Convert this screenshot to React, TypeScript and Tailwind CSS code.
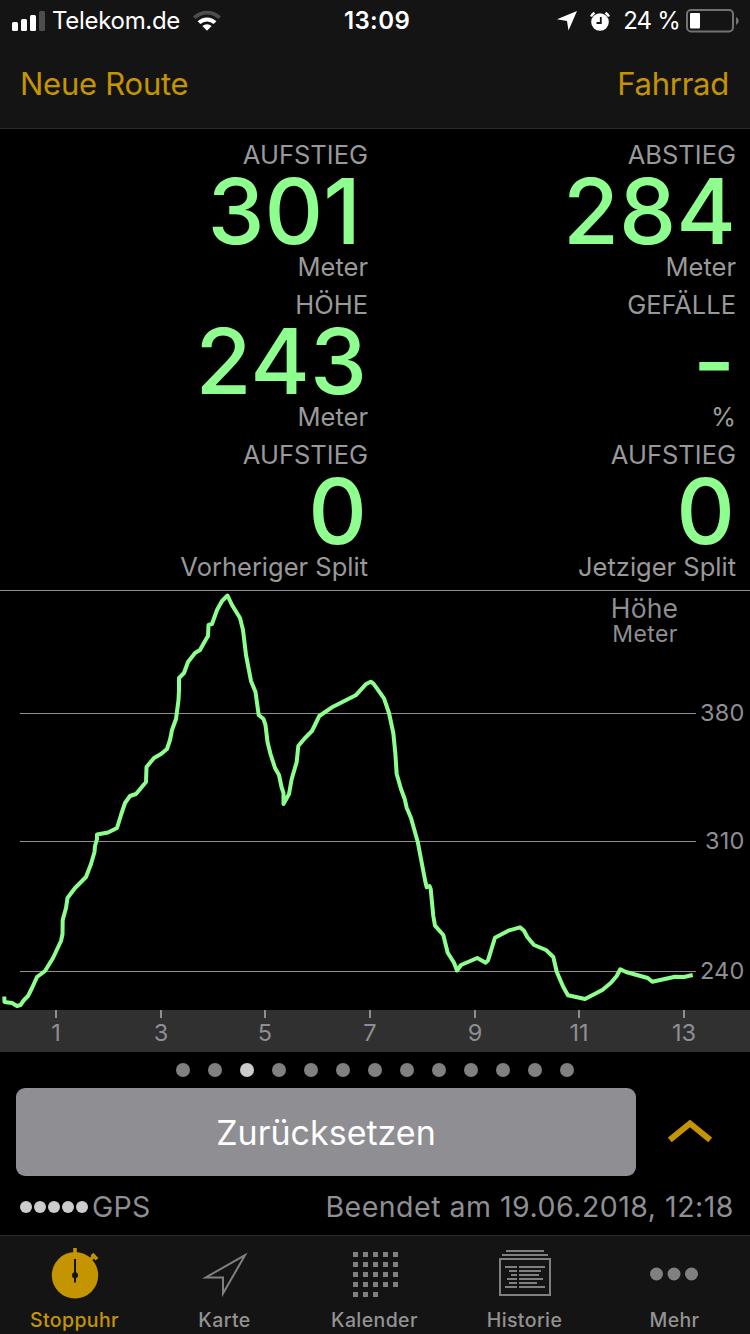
const metrics = [
  { label: 'AUFSTIEG', value: '301', unit: 'Meter', inset: 'pr-[7px]' },
  { label: 'ABSTIEG', value: '284', unit: 'Meter', inset: '' },
  { label: 'HÖHE', value: '243', unit: 'Meter', inset: 'pr-px' },
  { label: 'GEFÄLLE', value: '-', unit: '%', inset: 'pr-px' },
  { label: 'AUFSTIEG', value: '0', unit: 'Vorheriger Split', inset: 'pr-px' },
  { label: 'AUFSTIEG', value: '0', unit: 'Jetziger Split', inset: 'pr-px' },
];

const gridLines = [
  { y: 713.5, label: '380' },
  { y: 841.5, label: '310' },
  { y: 971.5, label: '240' },
];

const ticks = [
  { x: 56, label: '1' },
  { x: 161, label: '3' },
  { x: 265, label: '5' },
  { x: 370, label: '7' },
  { x: 475, label: '9' },
  { x: 579, label: '11' },
  { x: 684, label: '13' },
];

const profile =
  '4.3,996.5 4.5,1002 12,1003 17,1006 20.5,1005 24,1000 28,996 32,988 37,977 45,971 53,958 61,941 62.5,934 62.7,920 ' +
  '66,908 67.5,898 75,888 86,877 91,864 94.5,852 95,846 97,839 97,834.5 108,832.5 117,828 121,815 125,803 130,796 ' +
  '136,794 146,782 146.5,767 154,758 161,754 167,749 170,740 172,730 176,719 178.5,700 179,690 179,678 184,673 ' +
  '188,662 195,653 200,650 205,641 208,636 208.5,625 212,624 217,610 222,601 227.5,595.5 232,605 240,618 243,630 ' +
  '246,655 251,681 255.5,692 258.7,715 263.5,719 265.5,725 267.5,742 270.5,754 275,768 279,775 281.5,787 283.5,793 ' +
  '283.5,804 289,794 291.7,779 296.7,762 298.3,746 305,738 312,731 319.3,716 333,706.7 355.7,695.3 365.7,684.3 ' +
  '370.7,681.7 373.5,683.7 384,698.3 389,713 393.3,733 395.3,753 396.7,774 401,789 404.7,799 406.7,807.7 411,818 ' +
  '417.7,841.7 425,880 426.7,887.3 429.5,886 430.7,889 433.3,916 435,925.7 443.3,935 447.7,952.7 454,962.7 457,970.5 ' +
  '461,965 477.3,958 485.7,962.7 488,960.3 495,937.7 508.3,930.7 520,927.3 524,930.7 527.3,937 534,945 546,950 ' +
  '553.3,957 556.7,971.7 563.3,987 568,995.3 585,999 602.3,990 610.7,983 616.7,976 620.3,969.3 626,972 647.7,978 ' +
  '652.3,981.7 675,976.7 684,977 692.7,975';

function StatusBar() {
  return (
    <div className="flex h-10 items-center pt-0.5 text-white">
      <div className="flex flex-1 items-center pl-3">
        <svg width="33" height="20" viewBox="0 0 33 20" fill="currentColor">
          <rect x="0" y="11" width="6" height="9" rx="1.5" />
          <rect x="9" y="8" width="6" height="12" rx="1.5" />
          <rect x="18" y="4" width="6" height="16" rx="1.5" />
          <rect x="27" y="0" width="6" height="20" rx="1.5" fill="#4d4d4d" />
        </svg>
        <span className="ml-[7px] text-2xl tracking-[-0.3px]">Telekom.de</span>
        <svg className="ml-3" width="30" height="22" viewBox="0 0 30 22">
          <path d="M1 6.5a20 20 0 0 1 28 0l-2.6 2.6a16.2 16.2 0 0 0-22.8 0z" fill="#4d4d4d" />
          <path d="M5.6 11.3a13.4 13.4 0 0 1 18.8 0l-2.8 2.8a9.4 9.4 0 0 0-13.2 0z" fill="#fff" />
          <path d="M10.4 16a6.6 6.6 0 0 1 9.2 0L15 20.8z" fill="#fff" />
        </svg>
      </div>
      <span className="pl-[3px] text-2xl font-semibold tracking-[0.4px]">13:09</span>
      <div className="flex flex-1 items-center justify-end pr-[11px]">
        <svg width="20" height="20" viewBox="0 0 20 20" fill="currentColor">
          <path d="M20 0L11.5 19.5L10 10L0 8.3z" />
        </svg>
        <svg className="ml-3" width="22" height="20" viewBox="0 0 22 20">
          <circle cx="11" cy="11" r="8.8" fill="#fff" />
          <path d="M2 5.5A11 11 0 0 1 5.5 1.8M20 5.5A11 11 0 0 0 16.5 1.8" stroke="#fff" strokeWidth="2.4" fill="none" />
          <path d="M11.8 6v6H7.5" stroke="#141414" strokeWidth="1.8" fill="none" />
        </svg>
        <span className="ml-3 text-2xl tracking-[-0.8px]">24 %</span>
        <svg className="ml-1.5" width="53" height="24" viewBox="0 0 53 24">
          <rect x="1" y="1" width="46" height="21.5" rx="4" fill="none" stroke="#727272" strokeWidth="2" />
          <rect x="4" y="4" width="10" height="15.5" rx="1" fill="#fff" />
          <path d="M50 8a4.3 4.3 0 0 1 0 8z" fill="#727272" />
        </svg>
      </div>
    </div>
  );
}

function ElevationChart() {
  return (
    <svg width="750" height="462" viewBox="0 590 750 462" className="block" fill="#8e8e93">
      <rect x="0" y="590" width="750" height="1" />
      {gridLines.map((line) => (
        <g key={line.label}>
          <path d={`M20 ${line.y}H696`} stroke="#8e8e93" />
          <text x="744.5" y={line.y + 7.4} textAnchor="end" fontSize="23.5" letterSpacing="0.2">
            {line.label}
          </text>
        </g>
      ))}
      <text x="644.5" y="617.5" textAnchor="middle" fontSize="26.5" letterSpacing="0.2">
        Höhe
      </text>
      <text x="645" y="642" textAnchor="middle" fontSize="23" letterSpacing="0.4">
        Meter
      </text>
      <polyline points={profile} fill="none" stroke="#8eff8e" strokeWidth="4" strokeLinejoin="round" />
      <rect x="0" y="1010" width="750" height="42" fill="#303030" />
      {ticks.map((tick) => (
        <g key={tick.label}>
          <rect x={tick.x - 1} y="1010" width="2" height="8" />
          <text x={tick.x} y="1041" textAnchor="middle" fontSize="23.5">
            {tick.label}
          </text>
        </g>
      ))}
    </svg>
  );
}

function StopwatchIcon() {
  return (
    <svg width="48" height="52" viewBox="0 0 48 52">
      <circle cx="24" cy="27.3" r="23.2" fill="#c49500" />
      <path d="M24 0v8M38 13l4.5-4.5" stroke="#c49500" strokeWidth="3.5" />
      <path d="M41 6l5 5.2" stroke="#c49500" strokeWidth="3.6" />
      <path d="M24 11v23.5" stroke="#141414" strokeWidth="2" />
      <circle cx="24" cy="27.3" r="3" fill="#141414" />
    </svg>
  );
}

function MapIcon() {
  return (
    <svg width="46" height="46" viewBox="0 0 46 46" className="overflow-visible">
      <path d="M43 4.2L3.7 26.5H21V42.5z" fill="none" stroke="#808080" strokeWidth="2" strokeMiterlimit="8" />
    </svg>
  );
}

function CalendarIcon() {
  const cells = Array.from({ length: 23 }, (_, i) => i);
  return (
    <svg width="46" height="46" viewBox="-1 -1 46 46" fill="#808080">
      {cells.map((i) => (
        <rect key={i} x={(i % 5) * 10} y={Math.floor(i / 5) * 10} width="5" height="5" />
      ))}
    </svg>
  );
}

function HistoryIcon() {
  return (
    <svg width="52" height="48" viewBox="0 0 52 48" fill="none" stroke="#808080" strokeWidth="2">
      <path d="M7 1H45M3 5H49" />
      <rect x="1" y="9" width="50" height="36" />
      <path d="M6 17H18M20 17H46M10 21H18M20 21H42M12 25H18M20 25H40M8 29H18M20 29H44M10 33H18M20 33H38M6 37H18M20 37H46" />
    </svg>
  );
}

function MoreIcon() {
  return (
    <svg width="48" height="14" viewBox="0 0 48 14" fill="#808080" className="mr-0.5">
      <circle cx="6.5" cy="7" r="6.5" />
      <circle cx="24" cy="7" r="6.5" />
      <circle cx="41.5" cy="7" r="6.5" />
    </svg>
  );
}

const tabs = [
  { label: 'Stoppuhr', icon: <StopwatchIcon />, active: true },
  { label: 'Karte', icon: <MapIcon /> },
  { label: 'Kalender', icon: <CalendarIcon /> },
  { label: 'Historie', icon: <HistoryIcon /> },
  { label: 'Mehr', icon: <MoreIcon /> },
];

export default function App() {
  return (
    <div className="flex h-[1334px] w-[750px] flex-col overflow-hidden bg-black font-['Inter',sans-serif]">
      <header className="h-[129px] shrink-0 border-b border-[#2a2a2c] bg-[#141414]">
        <StatusBar />
        <div className="flex h-[88px] items-center justify-between pt-px pr-[21px] pl-5 text-[31px] tracking-[-0.25px] text-[#c49500]">
          <button>Neue Route</button>
          <button>Fahrrad</button>
        </div>
      </header>

      {/* Metrics */}
      <div className="grid h-[461px] shrink-0 auto-rows-[150px] grid-cols-[368px_1fr] pt-[11px] text-right">
        {metrics.map((metric, i) => (
          <div key={i} className="text-[25.5px] leading-[30px] text-[#999999] even:pr-[14px]">
            <div>{metric.label}</div>
            <div className={`h-[82px] text-[91px] leading-[82px] font-medium text-[#8eff8e] ${metric.inset}`}>
              {metric.value}
            </div>
            <div>{metric.unit}</div>
          </div>
        ))}
      </div>

      <ElevationChart />

      {/* Page indicator */}
      <div className="flex h-9 shrink-0 items-center justify-center gap-[18px]">
        {Array.from({ length: 13 }, (_, i) => (
          <span key={i} className={`size-[14px] rounded-full ${i === 2 ? 'bg-[#cccccc]' : 'bg-[#808080]'}`} />
        ))}
      </div>

      <div className="flex shrink-0 items-center pl-4">
        <button className="h-[88px] w-[620px] rounded-[9px] bg-[#8e8e93] text-[34px] text-white">Zurücksetzen</button>
        <svg className="ml-8" width="44" height="24" viewBox="0 0 44 24">
          <path d="M1.8 20L22 3.5L42.2 20" fill="none" stroke="#c49500" strokeWidth="6" />
        </svg>
      </div>

      <div className="flex h-[59px] shrink-0 items-center justify-between pt-[3px] pr-4 pl-5 text-[28.5px] text-[#8e8e93]">
        <div className="flex items-center">
          <div className="mr-1 flex gap-0.5">
            {Array.from({ length: 5 }, (_, i) => (
              <span key={i} className="size-3 rounded-full bg-[#cccccc]" />
            ))}
          </div>
          <span className="tracking-[0.3px]">GPS</span>
        </div>
        <span className="tracking-[0.5px]">Beendet am 19.06.2018, 12:18</span>
      </div>

      <nav className="grid flex-1 grid-cols-5 border-t border-[#2a2a2c] bg-[#141414]">
        {tabs.map((tab) => (
          <button
            key={tab.label}
            className={`flex flex-col items-center pt-3 text-[19.5px] font-medium ${tab.active ? 'text-[#c49500]' : 'text-[#929292]'}`}
          >
            <span className="flex h-[52px] items-center">{tab.icon}</span>
            <span className="mt-2 pr-px leading-6 tracking-[0.4px]">{tab.label}</span>
          </button>
        ))}
      </nav>
    </div>
  );
}
